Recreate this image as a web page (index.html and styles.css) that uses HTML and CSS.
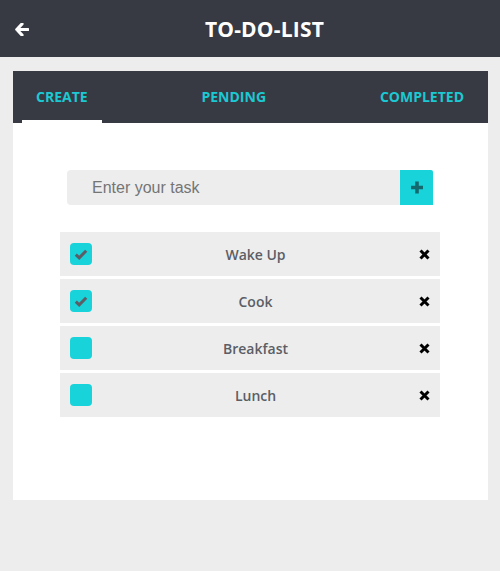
FILE: index.html
```html
<!DOCTYPE html>
<html>
<head>
<meta charset="utf-8">
<link rel="stylesheet" href="styles.css">
</head>
<body>
<header class="topbar">
  <svg class="back" width="14" height="13" viewBox="0 0 14 13"><path d="M7 1 L1.8 6.5 L7 12 M2 6.5 H13" fill="none" stroke="#fff" stroke-width="3.2" stroke-linejoin="round" stroke-linecap="round"/></svg>
  <h1 class="title">TO-DO-LIST</h1>
</header>
<main class="card">
  <nav class="tabs">
    <span class="tab active">CREATE</span>
    <span class="tab">PENDING</span>
    <span class="tab">COMPLETED</span>
  </nav>
  <section class="content">
    <div class="entry">
      <input class="task-input" type="text" placeholder="Enter your task">
      <button class="add"><svg width="12" height="13" viewBox="0 0 12 13"><path d="M6 0.5 V12.5 M0 6.5 H12" stroke="#13696e" stroke-width="3.6"/></svg></button>
    </div>
    <ul class="list">
      <li class="item"><span class="check on"><svg width="14" height="11" viewBox="0 0 14 11"><path d="M1.8 5.6 L5.2 8.8 L12.2 1.8" fill="none" stroke="#5b5e66" stroke-width="3"/></svg></span><span class="label">Wake Up</span><svg class="del" width="11" height="11" viewBox="0 0 11 11"><path d="M1.5 1.5 L9.5 9.5 M9.5 1.5 L1.5 9.5" stroke="#000" stroke-width="3"/></svg></li>
      <li class="item"><span class="check on"><svg width="14" height="11" viewBox="0 0 14 11"><path d="M1.8 5.6 L5.2 8.8 L12.2 1.8" fill="none" stroke="#5b5e66" stroke-width="3"/></svg></span><span class="label">Cook</span><svg class="del" width="11" height="11" viewBox="0 0 11 11"><path d="M1.5 1.5 L9.5 9.5 M9.5 1.5 L1.5 9.5" stroke="#000" stroke-width="3"/></svg></li>
      <li class="item"><span class="check"></span><span class="label">Breakfast</span><svg class="del" width="11" height="11" viewBox="0 0 11 11"><path d="M1.5 1.5 L9.5 9.5 M9.5 1.5 L1.5 9.5" stroke="#000" stroke-width="3"/></svg></li>
      <li class="item"><span class="check"></span><span class="label">Lunch</span><svg class="del" width="11" height="11" viewBox="0 0 11 11"><path d="M1.5 1.5 L9.5 9.5 M9.5 1.5 L1.5 9.5" stroke="#000" stroke-width="3"/></svg></li>
    </ul>
  </section>
</main>
</body>
</html>
```
FILE: styles.css
```css
* { box-sizing: border-box; }
html, body { margin: 0; padding: 0; }
body {
  background: #ededed;
  font-family: "Open Sans", "Liberation Sans", sans-serif;
  width: 500px;
  height: 571px;
  overflow: hidden;
}
.topbar {
  height: 57px;
  background: #373a43;
  display: flex;
  align-items: center;
  padding-left: 15px;
}
.back { display: block; margin-top: 1px; }
.title {
  flex: 1;
  margin: 0;
  text-align: center;
  color: #fff;
  font-size: 21px;
  font-weight: 700;
  letter-spacing: 0.2px;
}
.card {
  margin: 14px 12px 0 13px;
  height: 429px;
  background: #fff;
}
.tabs {
  height: 52px;
  background: #373a43;
  display: flex;
  justify-content: space-between;
  padding: 0 10px 0 9px;
}
.tab {
  display: flex;
  align-items: center;
  padding: 1px 14px 0;
  color: #1cc8d2;
  font-size: 14px;
  font-weight: 700;
  border-bottom: 3px solid transparent;
}
.tab.active { border-bottom-color: #fff; }
.content { padding-top: 47px; }
.entry {
  width: 366px;
  height: 35px;
  margin: 0 0 0 54px;
  display: flex;
}
.task-input {
  flex: 1;
  border: none;
  outline: none;
  background: #ededed;
  border-radius: 4px 0 0 4px;
  padding: 0 0 0 25px;
  font-family: "Liberation Sans", Arial, sans-serif;
  font-size: 16px;
  color: #333;
}
.task-input::placeholder { color: #757575; }
.add {
  width: 33px;
  border: none;
  padding: 0;
  background: #19d3da;
  border-radius: 0 2px 0 0;
  display: flex;
  align-items: center;
  justify-content: center;
}
.list {
  list-style: none;
  margin: 27px 0 0 47px;
  padding: 0;
  width: 380px;
}
.item {
  height: 44px;
  background: #ededed;
  margin-bottom: 3px;
  display: flex;
  align-items: center;
  padding: 0 10px;
}
.check {
  width: 22px;
  height: 22px;
  border-radius: 4px;
  background: #19d3da;
  display: flex;
  align-items: center;
  justify-content: center;
}
.label {
  flex: 1;
  text-align: center;
  color: #5b5e66;
  font-size: 14px;
  font-weight: 600;
}
.del { display: block; }
```
